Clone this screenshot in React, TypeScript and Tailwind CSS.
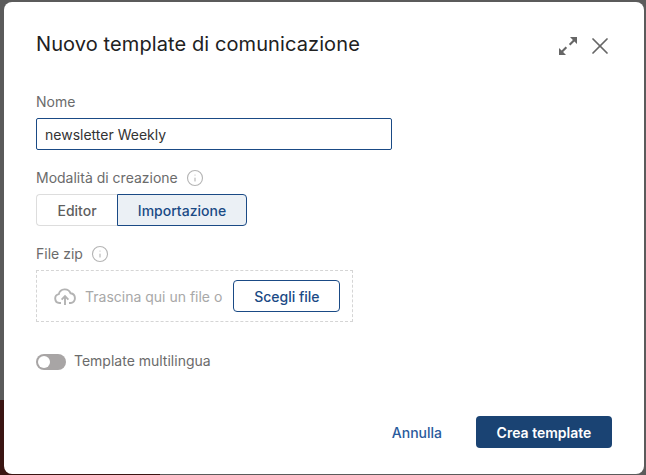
import { Info, X } from "lucide-react"

// Expand icon: two separate arrows with filled heads
function ExpandIcon() {
  return (
    <svg viewBox="0 0 20 20" className="w-[20px] h-[20px] text-[#666666]" fill="currentColor">
      <path d="M12 1H19V8L16.4 5.4L12.4 9.4L10.9 7.9L14.9 3.9Z" />
      <path d="M8 19H1V12L3.6 14.6L7.6 10.6L9.1 12.1L5.1 16.1Z" />
    </svg>
  )
}

function UploadCloud() {
  return (
    <svg viewBox="0 0 22 17" className="w-[22px] h-[17px] text-[#b3b3b3]" fill="none" stroke="currentColor" strokeWidth="1.9">
      <path d="M7 15H5.5a4.5 4.5 0 0 1-.7-8.9A6.2 6.2 0 0 1 16.6 5.3a4.9 4.9 0 0 1 .2 9.7H15" />
      <path d="M11 17V8.5M7.6 11.6L11 8.2L14.4 11.6" />
    </svg>
  )
}

export default function App() {
  return (
    <div className="relative w-[646px] h-[475px] overflow-hidden bg-[#5b5b5b] pt-[2px] pl-[4px] font-['Inter',sans-serif]">
      {/* page behind the overlay */}
      <div className="absolute left-0 bottom-0 w-[160px] h-[75px] bg-[#3a1512]" />

      <div className="relative w-[640px] h-[472px] bg-white rounded-[8px] flex flex-col pl-[32px] pr-[32px]">
        <div className="flex items-center justify-between h-[30px] mt-[27px]">
          <h2 className="text-[20px] leading-[30px] text-[#212121] font-normal tracking-[0.1px]">Nuovo template di comunicazione</h2>
          <div className="flex items-center gap-[8px] mt-[3px] mr-[-2px]">
            <ExpandIcon />
            <X className="w-[28px] h-[28px] text-[#666666]" strokeWidth={1.5} />
          </div>
        </div>

        <label className="mt-[33px] text-[14px] leading-[20px] text-[#6b6b6b]">Nome</label>
        <input
          readOnly
          value="newsletter Weekly"
          className="mt-[6px] w-[356px] h-[32px] px-[8px] border border-[#1a4a85] rounded-[2px] text-[14px] text-[#333333] outline-none"
        />

        <div className="mt-[18px] flex items-center gap-[8px] h-[20px]">
          <span className="text-[14px] leading-[20px] text-[#6b6b6b]">Modalità di creazione</span>
          <Info className="w-[18px] h-[18px] text-[#b5b5b5]" strokeWidth={1.5} />
        </div>
        <div className="mt-[6px] flex h-[32px] text-[14px]">
          <button className="w-[81px] border border-r-0 border-[#dddddd] rounded-l-[4px] text-[#5f5f5f] font-medium">Editor</button>
          <button className="w-[130px] border border-[#1a4a85] rounded-r-[4px] bg-[#ebf0f5] text-[#1a4a85] font-medium">Importazione</button>
        </div>

        <div className="mt-[18px] flex items-center gap-[8px] h-[20px]">
          <span className="text-[14px] leading-[20px] text-[#6b6b6b]">File zip</span>
          <Info className="w-[18px] h-[18px] text-[#b5b5b5]" strokeWidth={1.5} />
        </div>
        <div className="mt-[6px] w-[317px] h-[52px] border border-dashed border-[#d5d5d5] flex items-center pl-[17px]">
          <UploadCloud />
          <span className="ml-[9px] text-[14px] text-[#a8a8a8]">Trascina qui un file o</span>
          <button className="ml-[11px] w-[107px] h-[32px] border border-[#1a4a85] rounded-[4px] text-[14px] text-[#1a4a85] font-medium">Scegli file</button>
        </div>

        <div className="mt-[32px] flex items-center gap-[8px] h-[16px]">
          <div className="w-[30px] h-[16px] rounded-full bg-[#a8a5a5] p-[2px]">
            <div className="w-[12px] h-[12px] rounded-full bg-white" />
          </div>
          <span className="mt-[-2px] text-[14px] leading-[20px] text-[#6b6b6b]">Template multilingua</span>
        </div>

        <div className="mt-auto mb-[26px] flex items-center justify-end">
          <button className="text-[14px] text-[#2a5a9c] font-medium">Annulla</button>
          <button className="ml-[34px] w-[136px] h-[32px] rounded-[4px] bg-[#1a4373] text-white text-[14px] font-semibold">Crea template</button>
        </div>
      </div>
    </div>
  )
}
